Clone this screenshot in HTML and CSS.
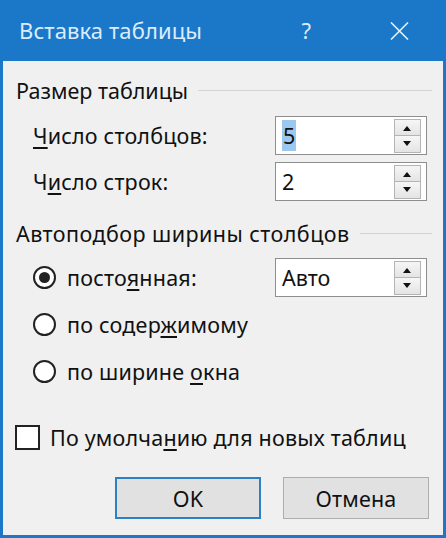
FILE: index.html
```html
<!DOCTYPE html>
<html lang="ru">
<head>
<meta charset="utf-8">
<title>Вставка таблицы</title>
<link rel="stylesheet" href="styles.css">
</head>
<body>
<div class="window">
  <div class="titlebar">
    <span class="title">Вставка таблицы</span>
    <span class="help">?</span>
    <svg class="close" width="19" height="18" viewBox="0 0 19 18"><path d="M1 0.5 L18 17.5 M18 0.5 L1 17.5" stroke="#e3f0fb" stroke-width="1.6" fill="none"/></svg>
  </div>
  <div class="content">
    <div class="group-head"><span>Размер таблицы</span><i class="rule"></i></div>
    <div class="row first">
      <span class="label"><u>Ч</u>исло столбцов:</span>
      <div class="spin"><span class="val"><span class="sel">5</span></span><div class="arrows"><b class="up"></b><b class="down"></b></div></div>
    </div>
    <div class="row">
      <span class="label">Ч<u>и</u>сло строк:</span>
      <div class="spin"><span class="val">2</span><div class="arrows"><b class="up"></b><b class="down"></b></div></div>
    </div>
    <div class="group-head second"><span>Автоподбор ширины столбцов</span><i class="rule"></i></div>
    <div class="row radio-row first-radio">
      <span class="radio checked"></span>
      <span class="label rlabel">посто<u>я</u>нная:</span>
      <div class="spin"><span class="val">Авто</span><div class="arrows"><b class="up"></b><b class="down"></b></div></div>
    </div>
    <div class="row radio-row">
      <span class="radio"></span>
      <span class="label rlabel">по содер<u>ж</u>имому</span>
    </div>
    <div class="row radio-row">
      <span class="radio"></span>
      <span class="label rlabel">по ширине <u>о</u>кна</span>
    </div>
    <div class="check-row">
      <span class="checkbox"></span>
      <span class="label">По умолча<u>н</u>ию для новых таблиц</span>
    </div>
    <div class="buttons">
      <div class="btn default">OK</div>
      <div class="btn">Отмена</div>
    </div>
  </div>
</div>
</body>
</html>
```
FILE: styles.css
```css
html, body { margin: 0; padding: 0; }
body { width: 446px; height: 538px; overflow: hidden; background: #f0f0f0; font-family: "Noto Sans", "Open Sans", sans-serif; color: #111; }
.window { box-sizing: border-box; width: 446px; height: 538px; background: #f0f0f0; border: 3px solid #1b78c9; border-top: none; display: flex; flex-direction: column; }
.titlebar { height: 61px; margin: 0 -3px; background: #1b78c9; display: flex; align-items: center; color: #dcecfa; flex-shrink: 0; }
.title { font-size: 22px; margin-left: 19px; letter-spacing: 0.1px; flex: 1; margin-top: -1px; }
.help { font-size: 22px; margin-right: 79px; margin-top: -2px; }
.close { margin-right: 37px; margin-top: 1px; }
.content { display: flex; flex-direction: column; padding: 15px 11px 0 13px; font-size: 21.5px; letter-spacing: 0.2px; }
.group-head { display: flex; align-items: center; height: 28px; }
.group-head span { white-space: nowrap; }
.group-head .rule { flex: 1; height: 1px; background: #d3d3d3; margin-left: 10px; }
.group-head.second { margin-top: 18px; }
.group-head.second span { letter-spacing: 0.45px; }
.group-head:first-child span { letter-spacing: 0; }
.row { display: flex; align-items: center; height: 39px; margin-top: 7px; padding-left: 17px; }
.row.first { margin-top: 12px; }
.row.first-radio { margin-top: 11px; }
.radio-row { margin-top: 8px; }
.label { flex: 1; white-space: nowrap; }
.label u { text-decoration-thickness: 1.5px; text-underline-offset: 3px; }
.spin { box-sizing: border-box; width: 152px; height: 39px; border: 1px solid #8e8e8e; background: #fff; display: flex; align-items: center; margin-right: 5px; letter-spacing: 0; }
.val { flex: 1; padding-left: 6px; font-size: 21.5px; }
.sel { background: #9cc8ef; padding: 1px 1px; }
.arrows { width: 27px; height: 34px; margin: 0 5px 0 0; display: flex; flex-direction: column; }
.arrows b { flex: 1; box-sizing: border-box; border: 1px solid #b4b4b4; background: linear-gradient(#f6f6f6, #e4e4e4); position: relative; }
.arrows b + b { border-top: none; }
.arrows b::after { content: ""; position: absolute; left: 8px; width: 0; height: 0; border-left: 4.5px solid transparent; border-right: 4.5px solid transparent; }
.arrows .up::after { top: 6px; border-bottom: 5px solid #111; }
.arrows .down::after { top: 5px; border-top: 5px solid #111; }
.radio { box-sizing: border-box; width: 23px; height: 23px; border: 2px solid #222; border-radius: 50%; background: #fff; margin-right: 11px; display: flex; align-items: center; justify-content: center; flex-shrink: 0; }
.radio.checked::after { content: ""; width: 11px; height: 11px; border-radius: 50%; background: #222; }
.check-row { display: flex; align-items: center; height: 28px; margin-top: 32px; margin-left: -1px; }
.checkbox { box-sizing: border-box; width: 25px; height: 25px; border: 2px solid #222; background: #fff; margin-right: 10px; flex-shrink: 0; }
.buttons { display: flex; justify-content: flex-end; gap: 22px; margin-top: 26px; padding-right: 3px; }
.btn { box-sizing: border-box; width: 146px; height: 42px; background: #e1e1e1; border: 1px solid #adadad; display: flex; align-items: center; justify-content: center; font-size: 21.5px; }
.btn.default { border: 2px solid #2f7fc4; }
```
